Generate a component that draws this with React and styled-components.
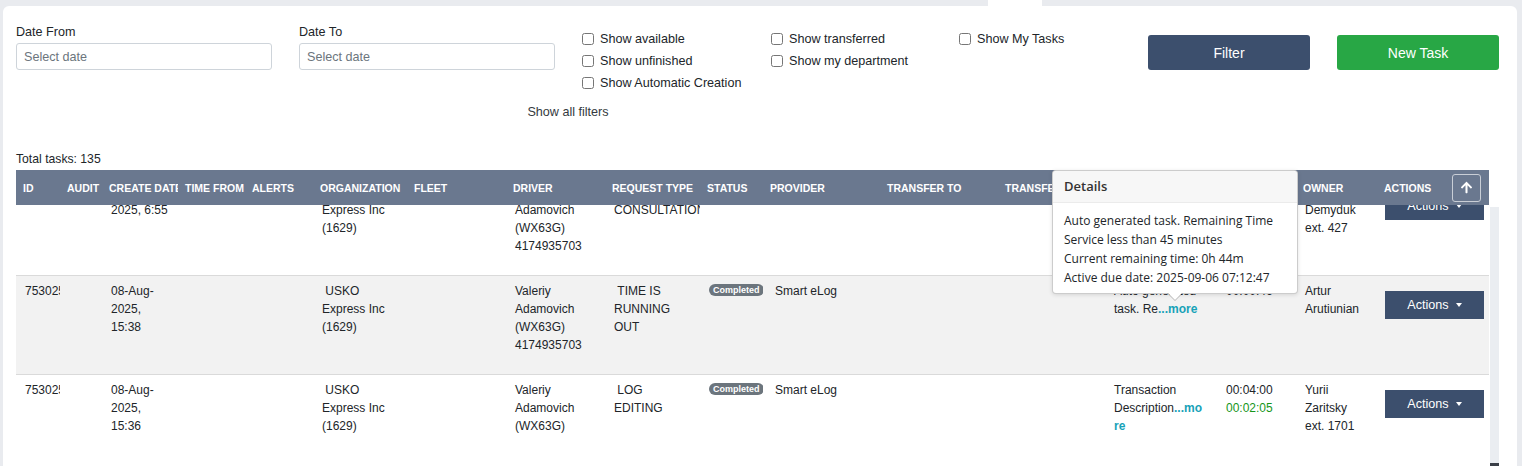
import { useLayoutEffect, useRef } from 'react';
import styled, { createGlobalStyle } from 'styled-components';
import { FaArrowUp } from 'react-icons/fa';

const GlobalStyle = createGlobalStyle`
  html, body {
    margin: 0;
    padding: 0;
    height: 100%;
    overflow: hidden;
    background: #e9ebef;
  }
  body {
    font-family: "Liberation Sans", Arial, sans-serif;
    color: #212529;
  }
  #root { height: 100%; }
`;

const cols = '44px 42px 76px 67px 68px 94px 99px 99px 95px 63px 117px 118px 107px 113px 78px 81px 112px';

const headers = [
  'ID', 'AUDIT', 'CREATE DATE', 'TIME FROM', 'ALERTS', 'ORGANIZATION', 'FLEET', 'DRIVER',
  'REQUEST TYPE', 'STATUS', 'PROVIDER', 'TRANSFER TO', 'TRANSFER FROM', 'DESCRIPTION', 'TIME', 'OWNER',
];

const tasks = [
  {
    id: '7530258', date: '08-Aug-2025, 6:55', org: '\u00a0USKO Express Inc (1629)',
    driver: 'Valeriy Adamovich (WX63G) 4174935703', request: '\u00a0DRIVER CONSULTATION',
    desc: 'Auto generated task. Re', times: ['00:00:52'], owner: 'Taras Demyduk ext. 427',
  },
  {
    id: '7530257', date: '08-Aug-2025, 15:38', org: '\u00a0USKO Express Inc (1629)',
    driver: 'Valeriy Adamovich (WX63G) 4174935703', request: '\u00a0TIME IS RUNNING OUT',
    desc: 'Auto generated task. Re', times: ['00:00:46'], owner: 'Artur Arutiunian',
  },
  {
    id: '7530256', date: '08-Aug-2025, 15:36', org: '\u00a0USKO Express Inc (1629)',
    driver: 'Valeriy Adamovich (WX63G)', request: '\u00a0LOG EDITING',
    desc: 'Transaction Description', times: ['00:04:00', '00:02:05'], owner: 'Yurii Zaritsky ext. 1701',
  },
  {
    id: '7530255', date: '08-Aug-2025, 15:31', org: '\u00a0USKO Express Inc (1629)',
    driver: 'Valeriy Adamovich (WX63G)', request: '\u00a0LOG EDITING',
    desc: 'Transaction Description', times: ['00:03:12'], owner: 'Yurii Zaritsky ext. 1701',
  },
];

const Page = styled.div`
  height: 100%;
  display: flex;
  flex-direction: column;
  box-sizing: border-box;
  padding: 0 5px 0 3px;
`;

const TabStrip = styled.div`
  height: 6px;
  display: flex;
`;

const Tab = styled.div`
  margin-left: 985px;
  width: 54px;
  background: #fff;
`;

const Card = styled.div`
  flex: 1;
  min-height: 0;
  display: flex;
  flex-direction: column;
  background: #fff;
  border-radius: 6px 6px 0 0;
  padding: 18px 18px 0 13px;
`;

const FilterBar = styled.div`
  display: flex;
  gap: 28px;
`;

const FilterMain = styled.div`
  width: 1104px;
  display: flex;
  flex-direction: column;
`;

const Fields = styled.div`
  display: flex;
`;

const DateField = styled.div`
  width: 256px;
  margin-right: 27px;
  display: flex;
  flex-direction: column;
  gap: 3px;
`;

const Label = styled.label`
  font-size: 12.6px;
  line-height: 16px;
`;

const DateInput = styled.input`
  box-sizing: border-box;
  height: 27px;
  border: 1px solid #ced4da;
  border-radius: 3px;
  padding: 0 7px;
  font-family: inherit;
  font-size: 12.6px;
  color: #495057;
  &::placeholder { color: #6c757d; }
`;

const CheckColumn = styled.div`
  width: ${p => p.$w}px;
  margin-top: 4px;
  display: flex;
  flex-direction: column;
`;

const Check = styled.label`
  height: 22px;
  display: flex;
  align-items: center;
  gap: 6px;
  font-size: 12.6px;
  white-space: nowrap;
  input {
    width: 12px;
    height: 12px;
    margin: 0;
  }
`;

const ShowAll = styled.div`
  margin-top: 10px;
  text-align: center;
  font-size: 12.6px;
  line-height: 16px;
  color: #343a40;
`;

const Buttons = styled.div`
  display: flex;
  gap: 27px;
  margin-top: 11px;
`;

const Button = styled.button`
  width: 162px;
  height: 35px;
  border: none;
  border-radius: 3px;
  background: ${p => p.$bg};
  color: #fff;
  font-family: inherit;
  font-size: 14px;
`;

const Total = styled.div`
  margin-top: 31px;
  font-size: 12.2px;
  line-height: 16px;
`;

const TableArea = styled.div`
  flex: 1;
  min-height: 0;
  margin-top: 3px;
  display: flex;
  gap: 1px;
`;

const TableWrap = styled.div`
  width: 1473px;
  position: relative;
  display: flex;
  flex-direction: column;
`;

const HeaderRow = styled.div`
  display: grid;
  grid-template-columns: ${cols};
  height: 35px;
  background: #6a788f;
  color: #fff;
  font-size: 10.5px;
  font-weight: bold;
`;

const HeadCell = styled.div`
  display: flex;
  align-items: center;
  padding-left: 7px;
  white-space: nowrap;
  overflow: hidden;
`;

const ActionsHead = styled(HeadCell)`
  justify-content: space-between;
  padding-right: 8px;
`;

const TopButton = styled.button`
  box-sizing: border-box;
  width: 29px;
  height: 28px;
  display: flex;
  align-items: center;
  justify-content: center;
  padding: 0;
  background: #6a788f;
  border: 1.5px solid #c9ced6;
  border-radius: 3px;
  color: #fff;
`;

const Body = styled.div`
  flex: 1;
  min-height: 0;
  overflow: hidden;
`;

const Row = styled.div`
  display: grid;
  grid-template-columns: ${cols};
  min-height: 98px;
  background: ${p => (p.$striped ? '#f2f2f2' : '#fff')};
  border-top: 1px solid #dadada;
  &:first-child { border-top: none; }
  font-size: 12px;
  line-height: 18px;
`;

const Cell = styled.div`
  padding: 6px ${p => p.$pr || 10}px 20px ${p => p.$pl || 9}px;
  overflow: hidden;
`;

const DescCell = styled(Cell)`
  overflow-wrap: anywhere;
`;

const More = styled.span`
  color: #17a2b8;
  font-weight: bold;
`;

const Time = styled.div`
  color: ${p => (p.$green ? '#16961a' : 'inherit')};
`;

const Badge = styled.span`
  display: inline-block;
  vertical-align: top;
  margin-top: 2px;
  height: 12px;
  line-height: 12px;
  padding: 0 4px;
  border-radius: 7px;
  background: #6c757d;
  color: #fff;
  font-size: 9px;
  font-weight: bold;
`;

const ActionsButton = styled.button`
  width: 99px;
  height: 28px;
  margin-top: 9px;
  display: flex;
  align-items: center;
  justify-content: center;
  gap: 7px;
  border: none;
  border-radius: 0;
  background: #3c4f6d;
  color: #fff;
  font-family: inherit;
  font-size: 12.6px;
`;

const Caret = styled.span`
  width: 0;
  height: 0;
  border-left: 3.5px solid transparent;
  border-right: 3.5px solid transparent;
  border-top: 4px solid #fff;
`;

const Track = styled.div`
  width: 9px;
  margin-top: 37px;
  background: #eaedf1;
  display: flex;
  flex-direction: column;
  justify-content: flex-end;
`;

const Thumb = styled.div`
  height: 3px;
  background: #3a3f47;
`;

const Popover = styled.div`
  position: absolute;
  top: 0;
  left: 1036px;
  width: 246px;
  box-sizing: border-box;
  background: #fff;
  border: 1px solid rgba(0, 0, 0, 0.2);
  border-radius: 4px;
  box-shadow: 0 1px 4px rgba(0, 0, 0, 0.12);
  font-family: "Open Sans", "Noto Sans", sans-serif;
  z-index: 2;
  &::before, &::after {
    content: '';
    position: absolute;
    left: 50%;
    width: 0;
    height: 0;
    border-style: solid;
    border-color: transparent;
  }
  &::before {
    bottom: -8px;
    margin-left: -8px;
    border-width: 8px 8px 0;
    border-top-color: rgba(0, 0, 0, 0.25);
  }
  &::after {
    bottom: -7px;
    margin-left: -7px;
    border-width: 7px 7px 0;
    border-top-color: #fff;
  }
`;

const PopHeader = styled.div`
  height: 31px;
  line-height: 31px;
  padding: 0 11px;
  background: #f7f7f7;
  border-bottom: 1px solid #ebebeb;
  border-radius: 4px 4px 0 0;
  font-size: 13px;
  font-weight: 600;
  color: #333;
`;

const PopBody = styled.div`
  padding: 8px 11px 6px;
  font-size: 12px;
  line-height: 19px;
  color: #212529;
`;

function TaskRow({ task, striped }) {
  return (
    <Row $striped={striped}>
      <Cell>{task.id}</Cell>
      <Cell />
      <Cell $pr={8}>{task.date}</Cell>
      <Cell />
      <Cell />
      <Cell>{task.org}</Cell>
      <Cell />
      <Cell>{task.driver}</Cell>
      <Cell>{task.request}</Cell>
      <Cell><Badge>Completed</Badge></Cell>
      <Cell $pl={12}>Smart eLog</Cell>
      <Cell />
      <Cell />
      <DescCell $pr={15}>{task.desc}<More>...more</More></DescCell>
      <Cell $pl={8}>
        {task.times.map((t, i) => <Time key={t} $green={i === 1}>{t}</Time>)}
      </Cell>
      <Cell>{task.owner}</Cell>
      <Cell $pl={8}>
        <ActionsButton>Actions<Caret /></ActionsButton>
      </Cell>
    </Row>
  );
}

export default function App() {
  const bodyRef = useRef(null);

  useLayoutEffect(() => {
    if (bodyRef.current) bodyRef.current.scrollTop = 28;
  }, []);

  return (
    <Page>
      <GlobalStyle />
      <TabStrip><Tab /></TabStrip>
      <Card>
        <FilterBar>
          <FilterMain>
            <Fields>
              <DateField>
                <Label>Date From</Label>
                <DateInput placeholder="Select date" />
              </DateField>
              <DateField>
                <Label>Date To</Label>
                <DateInput placeholder="Select date" />
              </DateField>
              <CheckColumn $w={189}>
                <Check><input type="checkbox" />Show available</Check>
                <Check><input type="checkbox" />Show unfinished</Check>
                <Check><input type="checkbox" />Show Automatic Creation</Check>
              </CheckColumn>
              <CheckColumn $w={188}>
                <Check><input type="checkbox" />Show transferred</Check>
                <Check><input type="checkbox" />Show my department</Check>
              </CheckColumn>
              <CheckColumn $w={161}>
                <Check><input type="checkbox" />Show My Tasks</Check>
              </CheckColumn>
            </Fields>
            <ShowAll>Show all filters</ShowAll>
          </FilterMain>
          <Buttons>
            <Button $bg="#3c4f6d">Filter</Button>
            <Button $bg="#28a745">New Task</Button>
          </Buttons>
        </FilterBar>

        <Total>Total tasks: 135</Total>

        <TableArea>
          <TableWrap>
            <HeaderRow>
              {headers.map(h => <HeadCell key={h}>{h}</HeadCell>)}
              <ActionsHead>
                ACTIONS
                <TopButton><FaArrowUp size={13} /></TopButton>
              </ActionsHead>
            </HeaderRow>
            <Body ref={bodyRef}>
              {tasks.map((t, i) => <TaskRow key={t.id} task={t} striped={i % 2 === 1} />)}
            </Body>
            <Popover>
              <PopHeader>Details</PopHeader>
              <PopBody>
                Auto generated task. Remaining Time Service less than 45 minutes
                <br />
                Current remaining time: 0h 44m
                <br />
                Active due date: 2025-09-06 07:12:47
              </PopBody>
            </Popover>
          </TableWrap>
          <Track><Thumb /></Track>
        </TableArea>
      </Card>
    </Page>
  );
}
